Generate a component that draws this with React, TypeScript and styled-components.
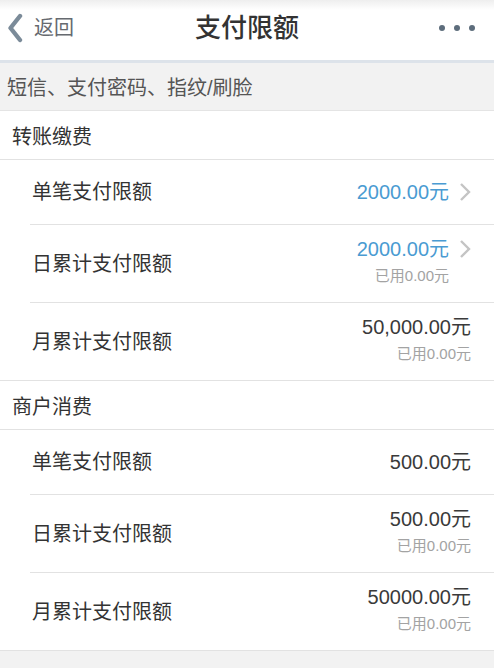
import styled, { createGlobalStyle } from 'styled-components';

const GlobalStyle = createGlobalStyle`
  html, body {
    margin: 0;
    padding: 0;
    background: #ffffff;
  }
  body {
    font-family: "Liberation Sans", "Noto Sans CJK SC", sans-serif;
    color: #333333;
  }
`;

const Screen = styled.div`
  width: 494px;
  height: 668px;
  background: #f2f2f2;
  overflow: hidden;
  display: flex;
  flex-direction: column;
`;

const NavBar = styled.header`
  height: 56px;
  padding-bottom: 4px;
  background: linear-gradient(#eeeeee 0px, #ffffff 10px);
  border-bottom: 3px solid #dde3ea;
  display: grid;
  grid-template-columns: 1fr auto 1fr;
  align-items: center;
`;

const BackButton = styled.div`
  display: flex;
  align-items: center;
  gap: 11px;
  padding-left: 7px;
  font-size: 20px;
  line-height: 24px;
  color: #666a70;
`;

const Title = styled.h1`
  margin: 0;
  font-size: 26px;
  line-height: 30px;
  font-weight: 500;
  color: #333333;
`;

const MoreButton = styled.div`
  justify-self: end;
  display: flex;
  gap: 9px;
  padding-right: 19px;
`;

const Dot = styled.span`
  width: 6px;
  height: 6px;
  border-radius: 50%;
  background: #5d6d7c;
`;

const Hint = styled.div`
  height: 47px;
  padding-left: 7px;
  display: flex;
  align-items: center;
  font-size: 20px;
  color: #555555;
  background: #f2f2f2;
  border-bottom: 1px solid #e4e4e4;
`;

const Group = styled.section`
  background: #ffffff;
  border-bottom: 1px solid #e2e2e2;
`;

const GroupTitle = styled.div`
  height: 48px;
  padding-left: 12px;
  display: flex;
  align-items: center;
  font-size: 20px;
  color: #333333;
  border-bottom: 1px solid #e2e2e2;
`;

const Row = styled.div<{ $tall: boolean }>`
  height: ${(p) => (p.$tall ? 77 : 64)}px;
  margin-left: 30px;
  padding-left: 2px;
  padding-right: 23px;
  display: flex;
  align-items: center;
  justify-content: space-between;
  border-bottom: 1px solid #e2e2e2;
  &:last-child {
    border-bottom: none;
  }
`;

const Label = styled.span`
  font-size: 20px;
  line-height: 24px;
  color: #333333;
`;

const Right = styled.div<{ $tall: boolean }>`
  display: flex;
  align-items: flex-start;
  gap: 10px;
  padding-bottom: ${(p) => (p.$tall ? 6 : 0)}px;
`;

const Values = styled.div`
  display: flex;
  flex-direction: column;
  align-items: flex-end;
  gap: 4px;
`;

const Amount = styled.span<{ $link: boolean }>`
  font-size: 20px;
  line-height: 26px;
  color: ${(p) => (p.$link ? '#4a9bd2' : '#3a3a3a')};
`;

const Used = styled.span`
  font-size: 15px;
  line-height: 20px;
  color: #a3a3a3;
`;

const ChevronBox = styled.div`
  height: 26px;
  display: flex;
  align-items: center;
`;

interface ILimit {
  label: string;
  amount: string;
  used?: string;
  link?: boolean;
}

interface IGroup {
  title: string;
  items: ILimit[];
}

const groups: IGroup[] = [
  {
    title: '转账缴费',
    items: [
      { label: '单笔支付限额', amount: '2000.00元', link: true },
      { label: '日累计支付限额', amount: '2000.00元', used: '已用0.00元', link: true },
      { label: '月累计支付限额', amount: '50,000.00元', used: '已用0.00元' },
    ],
  },
  {
    title: '商户消费',
    items: [
      { label: '单笔支付限额', amount: '500.00元' },
      { label: '日累计支付限额', amount: '500.00元', used: '已用0.00元' },
      { label: '月累计支付限额', amount: '50000.00元', used: '已用0.00元' },
    ],
  },
];

function LimitRow({ item }: { item: ILimit }) {
  return (
    <Row $tall={!!item.used}>
      <Label>{item.label}</Label>
      <Right $tall={!!item.used}>
        <Values>
          <Amount $link={!!item.link}>{item.amount}</Amount>
          {item.used && <Used>{item.used}</Used>}
        </Values>
        {item.link && (
          <ChevronBox>
            <svg width="12" height="20" viewBox="0 0 12 20">
              <path d="M2 2 L10 10 L2 18" fill="none" stroke="#c4c4c4" strokeWidth="2.4" />
            </svg>
          </ChevronBox>
        )}
      </Right>
    </Row>
  );
}

export default function App() {
  return (
    <>
      <GlobalStyle />
      <Screen>
        <NavBar>
          <BackButton>
            <svg width="16" height="30" viewBox="0 0 16 30">
              <path
                d="M13 3 L3.5 15 L13 27"
                fill="none"
                stroke="#7b8b99"
                strokeWidth="4.4"
                strokeLinecap="round"
                strokeLinejoin="round"
              />
            </svg>
            <span>返回</span>
          </BackButton>
          <Title>支付限额</Title>
          <MoreButton>
            <Dot />
            <Dot />
            <Dot />
          </MoreButton>
        </NavBar>
        <Hint>短信、支付密码、指纹/刷脸</Hint>
        {groups.map((group) => (
          <Group key={group.title}>
            <GroupTitle>{group.title}</GroupTitle>
            {group.items.map((item) => (
              <LimitRow item={item} key={item.label} />
            ))}
          </Group>
        ))}
      </Screen>
    </>
  );
}
